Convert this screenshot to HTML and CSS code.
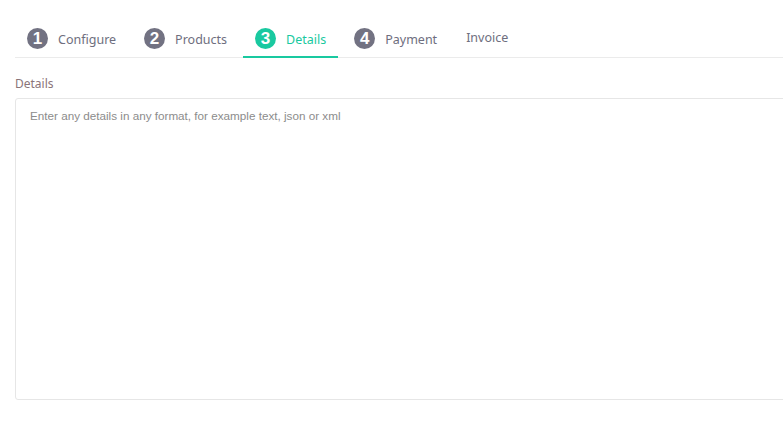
FILE: index.html
```html
<!DOCTYPE html>
<html>
<head>
<meta charset="utf-8">
<link rel="stylesheet" href="styles.css">
</head>
<body>
<div class="page">
  <nav class="steps">
    <div class="step"><span class="num">1</span><span class="label">Configure</span></div>
    <div class="step"><span class="num">2</span><span class="label">Products</span></div>
    <div class="step active"><span class="num">3</span><span class="label">Details</span></div>
    <div class="step"><span class="num">4</span><span class="label">Payment</span></div>
    <div class="step plain"><span class="label">Invoice</span></div>
  </nav>
  <div class="field">
    <label class="field-label" for="details">Details</label>
    <textarea id="details" class="details-input" placeholder="Enter any details in any format, for example text, json or xml"></textarea>
  </div>
</div>
</body>
</html>
```
FILE: styles.css
```css
html, body {
  margin: 0;
  padding: 0;
  background: #ffffff;
  overflow: hidden;
}
body {
  font-family: "Noto Sans", "Open Sans", sans-serif;
}
.page {
  width: 1000px;
  padding: 20px 0 0 15px;
}
.steps {
  display: flex;
  gap: 4px;
  border-bottom: 1px solid #ebebeb;
}
.step {
  display: flex;
  align-items: center;
  gap: 10px;
  padding: 8px 12px 7px;
  color: #6e6e7e;
  font-size: 12.5px;
  border-bottom: 2px solid transparent;
  margin-bottom: -1px;
}
.step .label {
  position: relative;
  top: 1px;
}
.step .num {
  width: 21px;
  height: 21px;
  border-radius: 50%;
  background: #727282;
  color: #fff;
  font-family: "Liberation Sans", Arial, sans-serif;
  font-weight: 700;
  font-size: 17px;
  line-height: 21px;
  text-align: center;
}
.step.active {
  color: #19c9a0;
  border-bottom-color: #19c9a0;
}
.step.active .num {
  background: #19c9a0;
}
.step.plain .label {
  top: -1px;
  padding-left: 1px;
}
.field {
  padding-top: 17px;
}
.field-label {
  display: block;
  font-size: 12px;
  color: #8a7479;
  margin-bottom: 6px;
}
.details-input {
  display: block;
  box-sizing: border-box;
  width: 100%;
  height: 302px;
  border: 1px solid #e6e6e6;
  border-radius: 3px;
  padding: 10px 14px 9px;
  font-family: "Liberation Sans", Arial, sans-serif;
  font-size: 11.7px;
  resize: none;
  outline: none;
}
.details-input::placeholder {
  color: #8c8c8c;
}
```
